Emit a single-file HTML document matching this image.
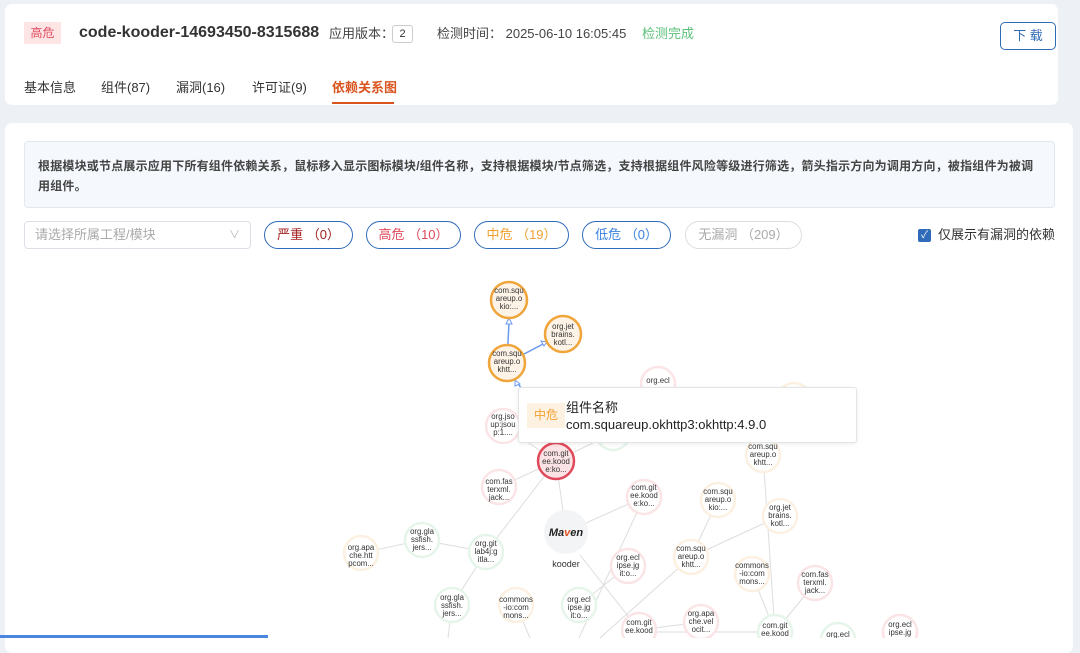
<!DOCTYPE html>
<html><head><meta charset="utf-8"><style>
*{margin:0;padding:0;box-sizing:border-box}
body{width:1080px;height:638px;overflow:hidden;background:#edf0f4;font-family:"Liberation Sans","Noto Sans CJK SC",sans-serif;position:relative;color:#333}
.card1{position:absolute;left:5px;top:4px;width:1053px;height:101px;background:#fff;border-radius:7px}
.card2{position:absolute;left:5px;top:123px;width:1068px;height:530px;background:#fff;border-radius:7px}
.abs{position:absolute;white-space:nowrap}
.pill{position:absolute;top:221px;height:28px;border-radius:14px;border:1px solid #2f6bb8;font-size:13px;line-height:26px;text-align:center}
.h{top:24px;line-height:20px;font-size:13px;color:#444}
</style></head><body>
<div class="card1"></div>
<div class="abs" style="left:24px;top:22px;width:37px;height:22px;background:#fde5e6;color:#e0495a;font-size:12px;line-height:22px;text-align:center">高危</div>
<div class="abs" style="left:79px;top:23px;font-size:16px;line-height:20px;font-weight:bold;color:#333">code-kooder-14693450-8315688</div>
<div class="abs h" style="left:329px">应用版本：</div>
<div class="abs" style="left:392px;top:25px;width:21px;height:18px;border:1px solid #ccc;border-radius:3px;font-size:11px;text-align:center;line-height:16px">2</div>
<div class="abs h" style="left:437px">检测时间： 2025-06-10 16:05:45</div>
<div class="abs h" style="left:642px;color:#5bbf7a">检测完成</div>
<div class="abs" style="left:1000px;top:22px;width:56px;height:28px;border:1px solid #2f6bb8;border-radius:5px;color:#2f6bb8;font-size:13px;text-align:center;line-height:26px">下 载</div>
<div class="abs" style="left:24px;top:77px;font-size:13px;color:#333">基本信息</div>
<div class="abs" style="left:101px;top:77px;font-size:13px;color:#333">组件(87)</div>
<div class="abs" style="left:176px;top:77px;font-size:13px;color:#333">漏洞(16)</div>
<div class="abs" style="left:252px;top:77px;font-size:13px;color:#333">许可证(9)</div>
<div class="abs" style="left:332px;top:77px;font-size:13px;color:#d9541e;font-weight:bold">依赖关系图</div>
<div class="abs" style="left:332px;top:102px;width:62px;height:2px;background:#d9541e"></div>

<div class="card2"></div>
<div class="abs" style="left:24px;top:141px;width:1031px;height:67px;background:#f5f9fd;border:1px solid #e1e8f0;border-radius:4px"></div>
<div class="abs" style="left:38px;top:156px;font-size:12px;font-weight:bold;color:#444;line-height:20px;white-space:normal;width:1000px;letter-spacing:0.2px">根据模块或节点展示应用下所有组件依赖关系，鼠标移入显示图标模块/组件名称，支持根据模块/节点筛选，支持根据组件风险等级进行筛选，箭头指示方向为调用方向，被指组件为被调用组件。</div>
<div class="abs" style="left:24px;top:221px;width:227px;height:28px;border:1px solid #dcdfe6;border-radius:4px;font-size:13px;color:#aaa;line-height:26px;padding-left:10px">请选择所属工程/模块<span style="position:absolute;right:10px;color:#bbb;font-size:11px">∨</span></div>
<div class="pill" style="left:264px;width:89px;color:#a32020">严重 （0）</div>
<div class="pill" style="left:366px;width:95px;color:#e0495a">高危 （10）</div>
<div class="pill" style="left:474px;width:95px;color:#f0a030">中危 （19）</div>
<div class="pill" style="left:582px;width:89px;color:#3a82e0">低危 （0）</div>
<div class="pill" style="left:685px;width:117px;color:#aaa;border-color:#ddd">无漏洞 （209）</div>
<div class="abs" style="left:918px;top:229px;width:13px;height:13px;background:#2f6bb8;border-radius:2px;color:#fff;font-size:10px;line-height:13px;text-align:center">✓</div>
<div class="abs" style="left:938px;top:226px;font-size:13px;line-height:18px;color:#333">仅展示有漏洞的依赖</div>

<svg class="abs" style="left:0;top:0" width="1080" height="638" font-family="Liberation Sans" font-size="7.8" text-anchor="middle">
<g stroke="#ddd" stroke-width="1" fill="none">
<line x1="566" y1="532" x2="556" y2="461"/><line x1="556" y1="461" x2="499" y2="487"/><line x1="556" y1="461" x2="486" y2="552"/>
<line x1="566" y1="532" x2="644" y2="497"/><line x1="486" y1="552" x2="422" y2="540"/><line x1="422" y1="540" x2="361" y2="553"/>
<line x1="486" y1="552" x2="452" y2="605"/><line x1="580" y1="555" x2="639" y2="630"/><line x1="644" y1="497" x2="579" y2="638"/>
<line x1="579" y1="605" x2="628" y2="566"/><line x1="691" y1="557" x2="718" y2="500"/><line x1="691" y1="557" x2="780" y2="516"/>
<line x1="600" y1="638" x2="691" y2="557"/><line x1="639" y1="630" x2="701" y2="622"/><line x1="639" y1="632" x2="775" y2="632"/>
<line x1="775" y1="632" x2="763" y2="455"/><line x1="775" y1="632" x2="752" y2="574"/><line x1="775" y1="632" x2="815" y2="583"/>
<line x1="763" y1="455" x2="794" y2="400"/><line x1="556" y1="461" x2="613" y2="433"/><line x1="556" y1="461" x2="503" y2="426"/>
<line x1="452" y1="605" x2="448" y2="638"/><line x1="516" y1="605" x2="530" y2="638"/>
</g>
<g stroke="#6a9af0" stroke-width="1.5" fill="none"><line x1="507" y1="363" x2="509" y2="322"/><line x1="507" y1="363" x2="545" y2="343"/><line x1="556" y1="440" x2="517" y2="382"/></g>
<g fill="#fff" stroke="#6a9af0" stroke-width="1"><path d="M509 318 l-3 6 h6z"/><path d="M547 342 l-6 -1 3 5z"/><path d="M515 380 l0 6 5 -2z"/></g>
<g stroke-width="2.5">
<circle cx="509" cy="300" r="18" fill="#fdf3e6" stroke="#f0a53a"/>
<circle cx="563" cy="334" r="18" fill="#fdf3e6" stroke="#f0a53a"/>
<circle cx="507" cy="363" r="18" fill="#fdf3e6" stroke="#f0a53a"/>
<circle cx="556" cy="461" r="18" fill="#fbe3e5" stroke="#e0495a"/>
</g>
<g stroke-width="2.5" fill="#fff">
<circle cx="658" cy="384" r="17" stroke="#fbe4e6"/><circle cx="503" cy="426" r="17" stroke="#fbe4e6"/>
<circle cx="613" cy="433" r="17" stroke="#e6f5ea"/><circle cx="794" cy="400" r="17" stroke="#fcf0e0"/>
<circle cx="763" cy="455" r="17" stroke="#fcf0e0"/><circle cx="499" cy="487" r="17" stroke="#fbe4e6"/>
<circle cx="644" cy="497" r="17" stroke="#fbe4e6"/><circle cx="718" cy="500" r="17" stroke="#fcf0e0"/>
<circle cx="780" cy="516" r="17" stroke="#fcf0e0"/><circle cx="422" cy="540" r="17" stroke="#e6f5ea"/>
<circle cx="486" cy="552" r="17" stroke="#e6f5ea"/><circle cx="361" cy="553" r="17" stroke="#fcf0e0"/>
<circle cx="628" cy="566" r="17" stroke="#fbe4e6"/><circle cx="691" cy="557" r="17" stroke="#fcf0e0"/>
<circle cx="752" cy="574" r="17" stroke="#fcf0e0"/><circle cx="815" cy="583" r="17" stroke="#fbe4e6"/>
<circle cx="452" cy="605" r="17" stroke="#e6f5ea"/><circle cx="516" cy="605" r="17" stroke="#fcf0e0"/>
<circle cx="579" cy="605" r="17" stroke="#e6f5ea"/><circle cx="639" cy="630" r="17" stroke="#fbe4e6"/>
<circle cx="701" cy="622" r="17" stroke="#fbe4e6"/><circle cx="775" cy="632" r="17" stroke="#e6f5ea"/>
<circle cx="838" cy="640" r="17" stroke="#e6f5ea"/><circle cx="900" cy="632" r="17" stroke="#fbe4e6"/>
</g>
<circle cx="566" cy="532" r="22" fill="#f3f4f6"/>
<text x="566" y="536" font-size="11" font-weight="bold" font-style="italic" fill="#222">Ma<tspan fill="#e05020">v</tspan>en</text>
<text x="566" y="567" font-size="9" fill="#333">kooder</text>
<g fill="#333">
<text x="509" y="293">com.squ</text><text x="509" y="301">areup.o</text><text x="509" y="309">kio:...</text>
<text x="563" y="329">org.jet</text><text x="563" y="337">brains.</text><text x="563" y="345">kotl...</text>
<text x="507" y="356">com.squ</text><text x="507" y="364">areup.o</text><text x="507" y="372">khtt...</text>
<text x="658" y="383">org.ecl</text>
<text x="503" y="419">org.jso</text><text x="503" y="427">up:jsou</text><text x="503" y="435">p:1....</text>
<text x="556" y="456">com.git</text><text x="556" y="464">ee.kood</text><text x="556" y="472">e:ko...</text>
<text x="794" y="394">com.squ</text><text x="794" y="402">areup.o</text><text x="794" y="410">kio:...</text>
<text x="763" y="449">com.squ</text><text x="763" y="457">areup.o</text><text x="763" y="465">khtt...</text>
<text x="499" y="484">com.fas</text><text x="499" y="492">terxml.</text><text x="499" y="500">jack...</text>
<text x="644" y="490">com.git</text><text x="644" y="498">ee.kood</text><text x="644" y="506">e:ko...</text>
<text x="718" y="494">com.squ</text><text x="718" y="502">areup.o</text><text x="718" y="510">kio:...</text>
<text x="780" y="510">org.jet</text><text x="780" y="518">brains.</text><text x="780" y="526">kotl...</text>
<text x="422" y="534">org.gla</text><text x="422" y="542">ssfish.</text><text x="422" y="550">jers...</text>
<text x="486" y="546">org.git</text><text x="486" y="554">lab4j:g</text><text x="486" y="562">itla...</text>
<text x="361" y="550">org.apa</text><text x="361" y="558">che.htt</text><text x="361" y="566">pcom...</text>
<text x="628" y="560">org.ecl</text><text x="628" y="568">ipse.jg</text><text x="628" y="576">it:o...</text>
<text x="691" y="551">com.squ</text><text x="691" y="559">areup.o</text><text x="691" y="567">khtt...</text>
<text x="752" y="568">commons</text><text x="752" y="576">-io:com</text><text x="752" y="584">mons...</text>
<text x="815" y="577">com.fas</text><text x="815" y="585">terxml.</text><text x="815" y="593">jack...</text>
<text x="452" y="600">org.gla</text><text x="452" y="608">ssfish.</text><text x="452" y="616">jers...</text>
<text x="516" y="602">commons</text><text x="516" y="610">-io:com</text><text x="516" y="618">mons...</text>
<text x="579" y="602">org.ecl</text><text x="579" y="610">ipse.jg</text><text x="579" y="618">it:o...</text>
<text x="639" y="625">com.git</text><text x="639" y="633">ee.kood</text>
<text x="701" y="616">org.apa</text><text x="701" y="624">che.vel</text><text x="701" y="632">ocit...</text>
<text x="775" y="628">com.git</text><text x="775" y="636">ee.kood</text>
<text x="838" y="637">org.ecl</text>
<text x="900" y="627">org.ecl</text><text x="900" y="635">ipse.jg</text>
</g>
</svg>
<div class="abs" style="left:518px;top:387px;width:339px;height:56px;background:#fff;border:1px solid #e4e4e4;border-radius:3px;box-shadow:0 1px 4px rgba(0,0,0,.08)"></div>
<div class="abs" style="left:527px;top:403px;width:38px;height:25px;background:#fdf1e2;color:#f0a030;font-size:12px;line-height:25px;text-align:center">中危</div>
<div class="abs" style="left:566px;top:397px;font-size:13px;color:#222">组件名称</div>
<div class="abs" style="left:566px;top:417px;font-size:13px;color:#222">com.squareup.okhttp3:okhttp:4.9.0</div>
<div class="abs" style="left:0;top:635px;width:268px;height:3px;background:#4a86e0"></div>
</body></html>
